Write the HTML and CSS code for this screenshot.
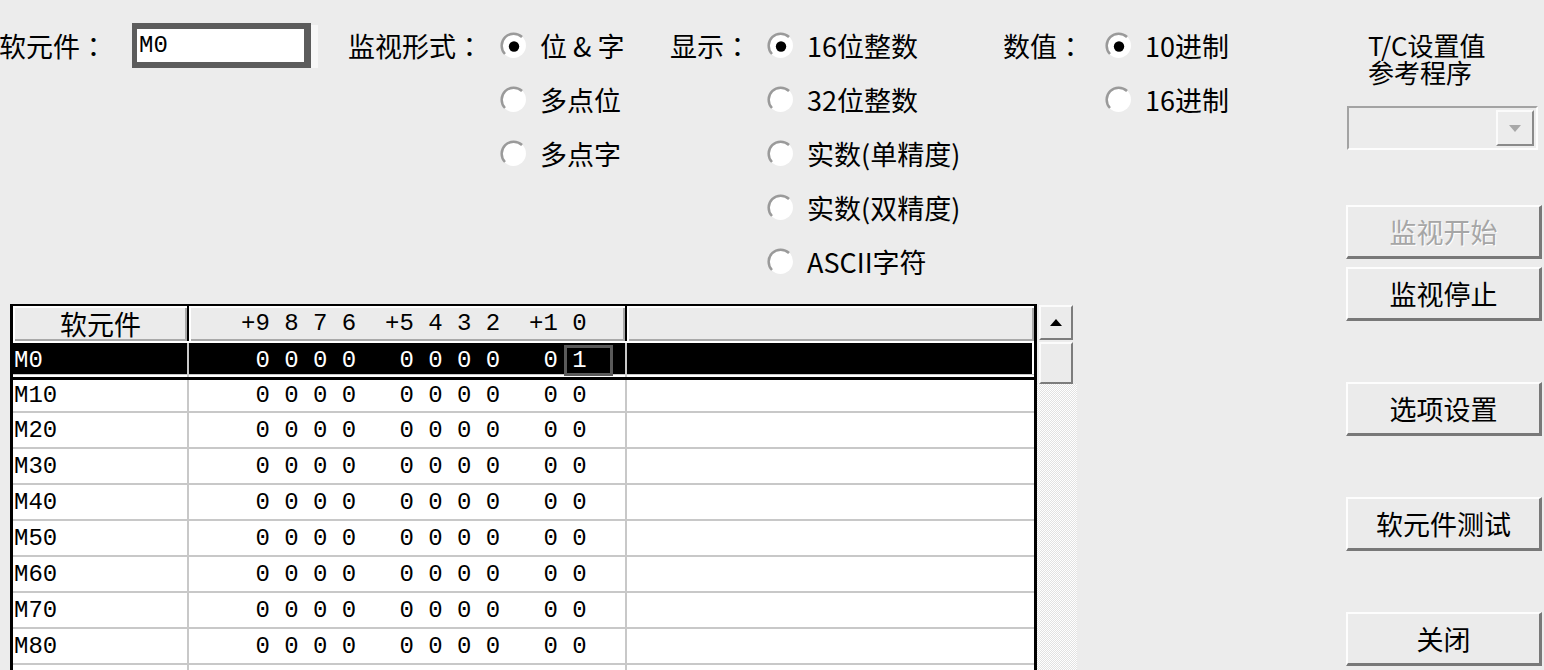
FILE: index.html
```html
<!DOCTYPE html>
<html lang="zh-CN">
<head>
<meta charset="utf-8">
<title>软元件批量监视</title>
<link rel="stylesheet" href="styles.css">
</head>
<body>
<div class="window">
  <div class="main">
    <div class="controls">
      <div class="group g-device">
        <span class="glabel w-device">软元件<span class="colon">：</span></span>
        <div class="field-wrap"><div class="field">M0</div></div>
      </div>
      <div class="group g-mode">
        <span class="glabel w-mode">监视形式<span class="colon">：</span></span>
        <div class="radios">
          <div class="radio-row"><svg class="radio" viewBox="0 0 26 26"><circle cx="13" cy="13" r="12" fill="#fff"/><path d="M4.8 21.2 A11.6 11.6 0 0 1 21.2 4.8" stroke="#9a9a9a" stroke-width="2.4" fill="none"/><circle cx="13.5" cy="14" r="5" fill="#000"/></svg><span>位 &amp; 字</span></div>
          <div class="radio-row"><svg class="radio" viewBox="0 0 26 26"><circle cx="13" cy="13" r="12" fill="#fff"/><path d="M4.8 21.2 A11.6 11.6 0 0 1 21.2 4.8" stroke="#9a9a9a" stroke-width="2.4" fill="none"/></svg><span>多点位</span></div>
          <div class="radio-row"><svg class="radio" viewBox="0 0 26 26"><circle cx="13" cy="13" r="12" fill="#fff"/><path d="M4.8 21.2 A11.6 11.6 0 0 1 21.2 4.8" stroke="#9a9a9a" stroke-width="2.4" fill="none"/></svg><span>多点字</span></div>
        </div>
      </div>
      <div class="group g-disp">
        <span class="glabel w-disp">显示<span class="colon">：</span></span>
        <div class="radios">
          <div class="radio-row"><svg class="radio" viewBox="0 0 26 26"><circle cx="13" cy="13" r="12" fill="#fff"/><path d="M4.8 21.2 A11.6 11.6 0 0 1 21.2 4.8" stroke="#9a9a9a" stroke-width="2.4" fill="none"/><circle cx="13.5" cy="14" r="5" fill="#000"/></svg><span>16位整数</span></div>
          <div class="radio-row"><svg class="radio" viewBox="0 0 26 26"><circle cx="13" cy="13" r="12" fill="#fff"/><path d="M4.8 21.2 A11.6 11.6 0 0 1 21.2 4.8" stroke="#9a9a9a" stroke-width="2.4" fill="none"/></svg><span>32位整数</span></div>
          <div class="radio-row"><svg class="radio" viewBox="0 0 26 26"><circle cx="13" cy="13" r="12" fill="#fff"/><path d="M4.8 21.2 A11.6 11.6 0 0 1 21.2 4.8" stroke="#9a9a9a" stroke-width="2.4" fill="none"/></svg><span>实数(单精度)</span></div>
          <div class="radio-row"><svg class="radio" viewBox="0 0 26 26"><circle cx="13" cy="13" r="12" fill="#fff"/><path d="M4.8 21.2 A11.6 11.6 0 0 1 21.2 4.8" stroke="#9a9a9a" stroke-width="2.4" fill="none"/></svg><span>实数(双精度)</span></div>
          <div class="radio-row"><svg class="radio" viewBox="0 0 26 26"><circle cx="13" cy="13" r="12" fill="#fff"/><path d="M4.8 21.2 A11.6 11.6 0 0 1 21.2 4.8" stroke="#9a9a9a" stroke-width="2.4" fill="none"/></svg><span>ASCII字符</span></div>
        </div>
      </div>
      <div class="group g-num">
        <span class="glabel w-num">数值<span class="colon">：</span></span>
        <div class="radios">
          <div class="radio-row"><svg class="radio" viewBox="0 0 26 26"><circle cx="13" cy="13" r="12" fill="#fff"/><path d="M4.8 21.2 A11.6 11.6 0 0 1 21.2 4.8" stroke="#9a9a9a" stroke-width="2.4" fill="none"/><circle cx="13.5" cy="14" r="5" fill="#000"/></svg><span>10进制</span></div>
          <div class="radio-row"><svg class="radio" viewBox="0 0 26 26"><circle cx="13" cy="13" r="12" fill="#fff"/><path d="M4.8 21.2 A11.6 11.6 0 0 1 21.2 4.8" stroke="#9a9a9a" stroke-width="2.4" fill="none"/></svg><span>16进制</span></div>
        </div>
      </div>
    </div>

    <div class="table-area">
      <div class="grid">
        <div class="row head">
          <div class="cell c1 hcell">软元件</div>
          <div class="cell c2 hcell mono">+9 8 7 6  +5 4 3 2  +1 0</div>
          <div class="cell c3 hcell"></div>
        </div>
        <div class="row sel">
          <div class="cell c1 mono">M0</div>
          <div class="cell c2 mono"> 0 0 0 0   0 0 0 0   0 <span class="cur">1</span></div>
          <div class="cell c3"></div>
        </div>
        <div class="row first">
          <div class="cell c1 mono">M10</div>
          <div class="cell c2 mono"> 0 0 0 0   0 0 0 0   0 0</div>
          <div class="cell c3"></div>
        </div>
        <div class="row">
          <div class="cell c1 mono">M20</div>
          <div class="cell c2 mono"> 0 0 0 0   0 0 0 0   0 0</div>
          <div class="cell c3"></div>
        </div>
        <div class="row">
          <div class="cell c1 mono">M30</div>
          <div class="cell c2 mono"> 0 0 0 0   0 0 0 0   0 0</div>
          <div class="cell c3"></div>
        </div>
        <div class="row">
          <div class="cell c1 mono">M40</div>
          <div class="cell c2 mono"> 0 0 0 0   0 0 0 0   0 0</div>
          <div class="cell c3"></div>
        </div>
        <div class="row">
          <div class="cell c1 mono">M50</div>
          <div class="cell c2 mono"> 0 0 0 0   0 0 0 0   0 0</div>
          <div class="cell c3"></div>
        </div>
        <div class="row">
          <div class="cell c1 mono">M60</div>
          <div class="cell c2 mono"> 0 0 0 0   0 0 0 0   0 0</div>
          <div class="cell c3"></div>
        </div>
        <div class="row">
          <div class="cell c1 mono">M70</div>
          <div class="cell c2 mono"> 0 0 0 0   0 0 0 0   0 0</div>
          <div class="cell c3"></div>
        </div>
        <div class="row">
          <div class="cell c1 mono">M80</div>
          <div class="cell c2 mono"> 0 0 0 0   0 0 0 0   0 0</div>
          <div class="cell c3"></div>
        </div>
        <div class="row">
          <div class="cell c1"></div>
          <div class="cell c2"></div>
          <div class="cell c3"></div>
        </div>
      </div>
      <div class="vscroll">
        <div class="sb-btn"><span class="arrow-up"></span></div>
        <div class="sb-thumb"></div>
        <div class="sb-track"></div>
      </div>
    </div>
  </div>

  <div class="side">
    <div class="side-label"><div>T/C设置值</div><div>参考程序</div></div>
    <div class="combo"><div class="combo-btn"><span class="arrow-down"></span></div></div>
    <div class="btn disabled b1">监视开始</div>
    <div class="btn b2">监视停止</div>
    <div class="btn b3">选项设置</div>
    <div class="btn b3">软元件测试</div>
    <div class="btn b3">关闭</div>
  </div>
</div>
</body>
</html>
```
FILE: styles.css
```css
html, body {
  margin: 0;
  padding: 0;
}
body {
  width: 1544px;
  height: 670px;
  overflow: hidden;
  background: #ececec;
  color: #000;
  font-family: "Noto Sans CJK SC", "Noto Sans", sans-serif;
  font-size: 27px;
}
.window {
  display: flex;
  width: 1544px;
  height: 670px;
}
.main {
  width: 1347px;
  display: flex;
  flex-direction: column;
}
.mono {
  font-family: "Liberation Mono", "DejaVu Sans Mono", monospace;
  font-size: 24px;
  white-space: pre;
}
.colon {
  font-family: "Noto Sans CJK TC", "Noto Sans CJK SC", sans-serif;
}

/* ---------- top controls ---------- */
.controls {
  display: flex;
  height: 304px;
  padding-top: 18px;
  box-sizing: border-box;
  flex-shrink: 0;
}
.group {
  display: flex;
  align-items: flex-start;
}
.glabel {
  height: 54px;
  display: flex;
  align-items: center;
  flex-shrink: 0;
  white-space: nowrap;
}
.g-device { width: 348px; }
.g-mode { width: 322px; }
.g-disp { width: 333px; }
.w-device { width: 133px; margin-left: -1px; }
.w-mode { width: 152px; }
.w-disp { width: 97px; }
.w-num { width: 102px; }

.field-wrap {
  height: 54px;
  display: flex;
  align-items: center;
}
.field {
  width: 165px;
  height: 33px;
  border: 6px solid #5c5c5c;
  border-left-width: 5px;
  border-right-width: 7px;
  background: #fff;
  padding-left: 2px;
  font-family: "Liberation Mono", "DejaVu Sans Mono", monospace;
  font-size: 24px;
  line-height: 33px;
  box-shadow: 8px 1px 0 -1px #f7f7f7;
}
.radios {
  display: flex;
  flex-direction: column;
}
.radio-row {
  height: 54px;
  display: flex;
  align-items: center;
  gap: 13px;
  white-space: nowrap;
}
.radio {
  width: 27px;
  height: 27px;
  flex-shrink: 0;
}

/* ---------- table ---------- */
.table-area {
  display: flex;
  margin-left: 10px;
  flex: 1;
  min-height: 0;
}
.grid {
  width: 1027px;
  border: 3px solid #000;
  border-top-width: 2px;
  border-bottom: none;
  box-sizing: border-box;
  background: #fff;
  display: flex;
  flex-direction: column;
}
.row {
  display: flex;
  height: 36px;
  flex-shrink: 0;
  box-sizing: border-box;
  border-bottom: 2px solid #c8c8c8;
}
.cell {
  box-sizing: border-box;
  display: flex;
  align-items: center;
  line-height: 25px;
}
.c1 {
  width: 176px;
  border-right: 2px solid #c8c8c8;
  padding-left: 1px;
}
.c2 {
  width: 438px;
  border-right: 2px solid #c8c8c8;
  padding-left: 52px;
}
.c3 {
  flex: 1;
}
.row.head {
  height: 35px;
  border-bottom: none;
  background: #ebebeb;
}
.hcell {
  box-shadow: inset 2px 2px 0 #fff, inset -2px -2px 0 #a9a9a9;
}
.head .c1 {
  border-right-color: #000;
  justify-content: center;
  font-size: 27px;
}
.head .c1.hcell {
  font-family: "Noto Sans CJK SC", sans-serif;
  white-space: nowrap;
}
.head .c2 {
  border-right-color: #000;
}
.row.sel {
  height: 39px;
  border-top: 2px solid #fff;
  border-bottom: 3px solid #000;
  color: #fff;
}
.row.sel .cell {
  background: #000;
  box-shadow: inset 0 -2px 0 #fff, inset 0 -3px 0 #c8c8c8;
}
.row.sel .c3 {
  box-shadow: inset 0 -2px 0 #fff, inset 0 -3px 0 #c8c8c8, inset -2px 0 0 #fff;
}
.row.first {
  height: 33px;
}
.cur {
  display: inline-block;
  border: 3px solid #5a5a5a;
  margin-left: -8px;
  padding: 0 23px 0 5px;
  line-height: 25px;
}

/* ---------- scrollbar ---------- */
.vscroll {
  width: 40px;
  display: flex;
  flex-direction: column;
}
.sb-btn, .sb-thumb {
  margin-left: 2px;
  width: 34px;
  box-sizing: border-box;
  background: #ebebeb;
  border: 2px solid;
  border-color: #fbfbfb #7c7c7c #7c7c7c #fbfbfb;
  flex-shrink: 0;
}
.sb-btn {
  margin-top: 1px;
  height: 35px;
  display: flex;
  align-items: center;
  justify-content: center;
}
.arrow-up {
  width: 0;
  height: 0;
  border-left: 6px solid transparent;
  border-right: 6px solid transparent;
  border-bottom: 7px solid #000;
}
.sb-thumb {
  margin-top: 2px;
  height: 42px;
}
.sb-track {
  flex: 1;
  background: repeating-conic-gradient(#ffffff 0 25%, #e2e2e2 0 50%) 0 0 / 2px 2px;
}

/* ---------- side column ---------- */
.side {
  width: 197px;
  display: flex;
  flex-direction: column;
}
.side-label {
  margin: 31px 0 0 21px;
  font-size: 26px;
  line-height: 27px;
  white-space: nowrap;
}
.side-label div {
  height: 27px;
}
.combo {
  margin-top: 21px;
  width: 191px;
  height: 44px;
  box-sizing: border-box;
  border: 2px solid;
  border-color: #a3a3a3 #fdfdfd #fdfdfd #a3a3a3;
  background: #ececec;
  display: flex;
  justify-content: flex-end;
  align-items: center;
  padding-right: 2px;
}
.combo-btn {
  width: 38px;
  height: 36px;
  box-sizing: border-box;
  border: 2px solid;
  border-color: #fbfbfb #8a8a8a #8a8a8a #fbfbfb;
  display: flex;
  align-items: center;
  justify-content: center;
}
.arrow-down {
  width: 0;
  height: 0;
  border-left: 6px solid transparent;
  border-right: 6px solid transparent;
  border-top: 7px solid #a8a8a8;
}
.btn {
  width: 196px;
  height: 54px;
  box-sizing: border-box;
  border-style: solid;
  border-width: 2px 3px 3px 2px;
  border-color: #fdfdfd #787878 #787878 #fdfdfd;
  background: #ebebeb;
  display: flex;
  align-items: center;
  justify-content: center;
  white-space: nowrap;
  margin-left: -1px;
}
.b1 { margin-top: 55px; }
.b2 { margin-top: 8px; }
.b3 { margin-top: 61px; }
.disabled {
  color: #a6a6a6;
  text-shadow: 1px 1px 0 #fff;
}
```
